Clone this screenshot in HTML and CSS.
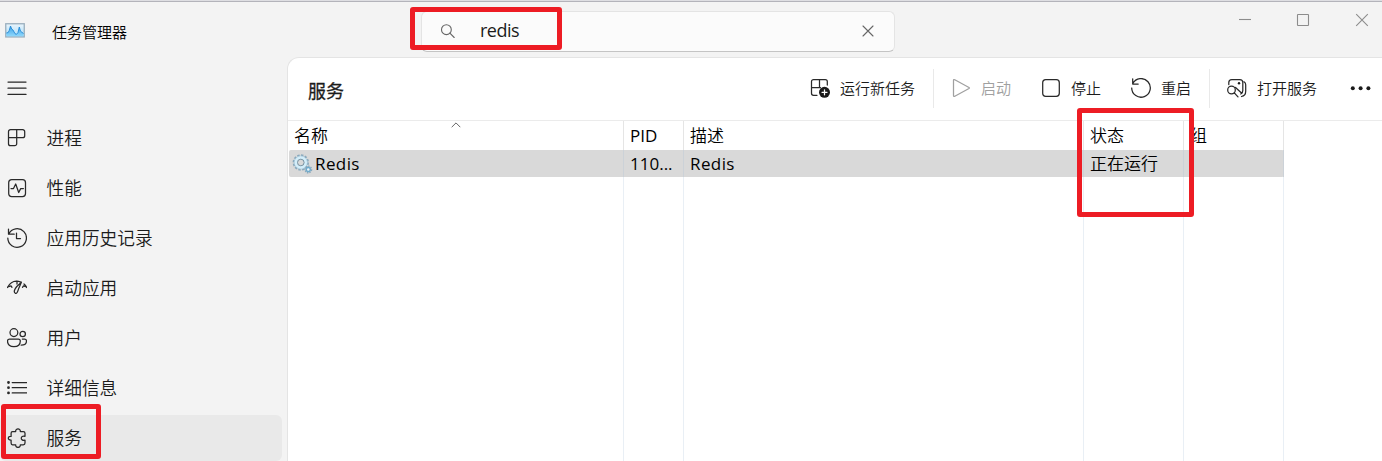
FILE: index.html
```html
<!DOCTYPE html>
<html lang="zh-CN">
<head>
<meta charset="utf-8">
<title>任务管理器</title>
<link rel="stylesheet" href="styles.css">
</head>
<body>
<div class="window">
  <header class="titlebar">
    <div class="brand">
      <svg class="app-icon" width="20" height="15" viewBox="0 0 20 15">
        <defs><linearGradient id="sky" x1="0" y1="0" x2="0" y2="1"><stop offset="0" stop-color="#eaf5fc"/><stop offset="1" stop-color="#a9dcf8"/></linearGradient>
        <linearGradient id="wave" x1="0" y1="0" x2="0" y2="1"><stop offset="0" stop-color="#3b9fe4"/><stop offset="1" stop-color="#8fd8fc"/></linearGradient></defs>
        <rect x=".75" y=".75" width="18.5" height="13.2" fill="url(#sky)" stroke="#9aaebd" stroke-width="1.3"/>
        <path d="M1.4 10l1.800-.5 1-2L5.500 3l1.200 3 1.300 1 2 3.700 1.500.6 1.500-1.800L14.300 4l1.200 4.200 3 2.300v2.800H1.400z" fill="url(#wave)"/>
        <path d="M1.400 10l1.800-.5 1-2L5.500 3l1.200 3 1.300 1 2 3.700 1.500.6 1.500-1.800L14.300 4l1.200 4.200 3 2.300" fill="none" stroke="#2489d6" stroke-width=".9"/>
      </svg>
      <span class="app-name">任务管理器</span>
    </div>
    <div class="search">
      <svg class="icon" width="16" height="16" viewBox="0 0 16 16"><circle cx="6.400" cy="6.700" r="4.900"/><path d="M9.900 10.200l4.300 4.300"/></svg>
      <span class="query">redis</span>
      <svg class="icon" width="12" height="12" viewBox="0 0 12 12"><path d="M1 1l10 10M11 1L1 11"/></svg>
    </div>
    <div class="controls">
      <svg width="14" height="14" viewBox="0 0 14 14"><path d="M2 6.500h12"/></svg>
      <svg width="14" height="14" viewBox="0 0 14 14"><rect x="1.500" y="1.500" width="11" height="11" rx=".5"/></svg>
      <svg width="14" height="14" viewBox="0 0 14 14"><path d="M1.200 1.200l11.600 11.600M12.800 1.200L1.200 12.800"/></svg>
    </div>
  </header>
  <nav class="sidebar">
    <div class="item"><svg class="icon" width="20" height="20" viewBox="0 0 20 20"><path d="M1 4h18M1 10.200h18M1 16.400h18"/></svg></div>
    <div class="item"><svg class="icon" width="20" height="20" viewBox="0 0 20 20"><path d="M3.500 1.700h12.200a2 2 0 0 1 2 2v4a2 2 0 0 1-2 2H9.700v6a2 2 0 0 1-2 2H3.500a2 2 0 0 1-2-2V3.700a2 2 0 0 1 2-2zM9.700 1.700v8M1.500 9.700h8.200"/></svg><span>进程</span></div>
    <div class="item"><svg class="icon" width="20" height="20" viewBox="0 0 20 20"><rect x="1.700" y="1.700" width="16.800" height="16.800" rx="3"/><path d="M4 10.600h2.500L8.700 6l3 8.500 2-3.900h2.700"/></svg><span>性能</span></div>
    <div class="item"><svg class="icon" width="20" height="20" viewBox="0 0 20 20"><path d="M1.500 1v5.200h5.700M1.700 6A9.300 9.300 0 1 1 .8 10M9.500 5v5.500h4"/></svg><span>应用历史记录</span></div>
    <div class="item"><svg class="icon" width="20" height="20" viewBox="0 0 20 20"><path d="M.5 9.500C3.500 4 8.500 2 14 4.200M17 6c1.200 1 2 2 2.600 3.500M10 3v3M.8 9l3.200-1.200 1 1.500M19.500 9l-3-1.200-1 1.500M8.300 15.300c-2-1.100-.8-4.100 1.500-6.800l4.600-4.300-2.700 6.200c-.8 3-1.900 5.500-3.400 4.900z"/></svg><span>启动应用</span></div>
    <div class="item"><svg class="icon" width="20" height="20" viewBox="0 0 20 20"><circle cx="6.900" cy="4.600" r="3.900"/><circle cx="15.700" cy="6" r="2.700"/><path d="M2.500 11h8.800q2 0 2 2c0 3.600-2.500 5.700-6.400 5.700S.5 16.600.5 13q0-2 2-2zM15.300 11h2.300q1.900 0 1.900 2c0 2.500-1.900 4.200-5.300 4.200"/></svg><span>用户</span></div>
    <div class="item"><svg class="icon" width="20" height="20" viewBox="0 0 20 20"><path d="M5.200 4.500H20M5.200 9.700H20M5.200 14.900H20"/><path class="bullets" d="M1.500 4.500h.01M1.500 9.700h.01M1.500 14.900h.01"/></svg><span>详细信息</span></div>
    <div class="item selected"><svg class="icon" width="20" height="20" viewBox="0 0 20 20"><path d="M5.500 3.500h3.200c-.5-3.400 5.100-3.400 4.600 0h3q1.700 0 1.700 1.700v3.100c-5-1.300-5 5.100 0 3.800v3q0 1.700-1.700 1.700h-3c.5 3.500-5.100 3.500-4.600 0H5.500q-1.400 0-1.400-1.700v-3c-3.700.3-3.700-4.300 0-3.800V5.200q0-1.700 1.400-1.700z"/></svg><span>服务</span></div>
  </nav>
  <main class="panel">
    <div class="toolbar">
      <h1>服务</h1>
      <div class="actions">
        <button><svg class="icon" width="20" height="20" viewBox="0 0 20 20"><path d="M7 17.300H3.500a2 2 0 0 1-2-2V3.500a2 2 0 0 1 2-2h11.800a2 2 0 0 1 2 2V7M9.500 1.500v8M1.500 9.500h9"/><circle class="solid" cx="14.500" cy="14.300" r="5.500"/><path class="plus" d="M14.500 11.800v5M12 14.300h5"/></svg>运行新任务</button>
        <i class="divider"></i>
        <button class="disabled"><svg class="icon" width="20" height="20" viewBox="0 0 20 20"><path d="M2.500 2.500v15q0 1.300 1.300.7L18 10.500q.8-.5 0-1L3.800 1.800q-1.300-.6-1.300.7z"/></svg>启动</button>
        <button><svg class="icon" width="20" height="20" viewBox="0 0 20 20"><rect x="1.700" y="1.700" width="16.600" height="16.600" rx="3"/></svg>停止</button>
        <button><svg class="icon" width="20" height="20" viewBox="0 0 20 20"><path d="M1.700.8v5.200h5.500M1.800 5.500A9.300 9.300 0 1 1 .7 10"/></svg>重启</button>
        <i class="divider"></i>
        <button><svg class="icon" width="20" height="20" viewBox="0 0 20 20"><path d="M1.800 6.500V4.500q0-3 3-3h8q3 0 3 3V12.500q0 2.500-2 3.500M17 3.800q1.700 1 1.700 3v6.500q0 4.500-4.200 5.200M8.500 9.500l6.300 5.800"/><circle cx="4.500" cy="12" r="3.800"/><path d="M7.300 14.800l3.700 4"/><circle class="solid" cx="12" cy="5.300" r="1.200"/></svg>打开服务</button>
        <svg class="more" width="21" height="20" viewBox="0 0 21 20"><circle cx="2.800" cy="10.300" r="2"/><circle cx="10.600" cy="10.300" r="2"/><circle cx="18.400" cy="10.300" r="2"/></svg>
      </div>
    </div>
    <div class="table">
      <div class="row head"><div class="sorted">名称<svg class="sort" width="10" height="6" viewBox="0 0 10 6"><path d="M.7 5.200L5 .9l4.300 4.300"/></svg></div><div class="latin">PID</div><div>描述</div><div>状态</div><div>组</div></div>
      <div class="row active"><div class="service latin name"><svg width="21" height="20" viewBox="0 0 21 20"><circle class="teeth" cx="8.800" cy="8.500" r="6.900"/><circle class="rim" cx="8.800" cy="8.500" r="6.400"/><circle class="gear" cx="8.800" cy="8.500" r="4.900"/><circle class="hub" cx="8.800" cy="8.500" r="3.300"/><circle class="teeth small" cx="16.300" cy="15.500" r="3.300"/><circle class="gear small" cx="16.300" cy="15.500" r="2"/></svg>Redis</div><div class="latin">110...</div><div class="latin name">Redis</div><div>正在运行</div><div></div></div>
      <div class="row blank"><div></div><div></div><div></div><div></div><div></div></div>
    </div>
  </main>
  <div class="mark mark-search"></div>
  <div class="mark mark-state"></div>
  <div class="mark mark-nav"></div>
</div>
</body>
</html>
```
FILE: styles.css
```css
* { box-sizing: border-box; }
body { margin: 0; overflow: hidden; font-family: "Open Sans", "Noto Sans CJK SC", sans-serif; color: #1b1b1b; }
svg { display: block; flex: none; fill: none; }
.window {
  position: relative; width: 1382px; height: 461px; overflow: hidden;
  display: grid; grid-template: 57px 404px / 287px 1095px; background: #f3f3f3;
}
.titlebar {
  grid-column: 1 / 3; display: grid; grid-template-columns: 421px 474px 1fr;
  border-top: 1px solid #dedee2; box-shadow: inset 0 1px #b3b3ba;
}
.brand { display: flex; align-items: flex-start; padding: 22px 0 0 5px; }
.app-name { margin: -2px 0 0 27px; font: 350 15px/22px "Noto Sans CJK SC", sans-serif; color: #000; }
.search {
  display: flex; align-items: center; height: 41px; margin-top: 10px; padding: 0 20px 2px 18px;
  background: #fbfbfb; border: 1px solid #e4e4e4; border-bottom-color: #c4c4c4; border-radius: 6px;
}
.search .icon { stroke: #666; stroke-width: 1.1; }
.query { flex: 1; margin: -2px 0 0 24px; font-size: 18px; line-height: 24px; letter-spacing: -.5px; }
.controls { display: flex; justify-content: flex-end; gap: 45px; padding: 12px 13px 0 0; }
.controls svg { stroke: #8c8c8c; stroke-width: 1.1; }
.icon { stroke: #292929; stroke-width: 1.25; stroke-linecap: round; stroke-linejoin: round; }
.sidebar { padding-top: 6px; }
.item { display: flex; align-items: center; gap: 19.500px; height: 50px; padding-left: 7px; font-size: 17.7px; font-weight: 350; line-height: 26px; }
.item.selected { height: 46px; margin: 2px 5px 0 0; background: #e9e9e9; border-radius: 6px; }
.bullets { stroke-width: 2.8; }
.panel { display: flex; flex-direction: column; background: #fff; border: 1px solid #e4e4e4; border-width: 1px 0 0 1px; border-top-left-radius: 12px; }
.toolbar { display: flex; align-items: center; justify-content: space-between; height: 63px; padding: 0 11px 0 20px; border-bottom: 1px solid #ebebeb; }
h1 { margin: 4px 0 0; font-size: 18px; font-weight: 400; line-height: 26px; -webkit-text-stroke: .3px; }
.actions { display: flex; align-items: center; height: 40px; margin-top: -2px; }
.actions button { display: flex; align-items: center; gap: 10px; padding: 0; border: 0; background: none; color: #1b1b1b; font: 350 15px/22px "Noto Sans CJK SC", sans-serif; }
.actions button + button { margin-left: 30px; }
.actions .disabled { color: #a0a0a0; }
.disabled .icon { stroke: #a0a0a0; }
.divider { width: 1px; height: 39px; margin: 0 17px 0 18px; background: #e9e9e9; }
.solid { fill: #1b1b1b; stroke: none; }
.plus { stroke: #fff; }
.more { margin-left: 33px; fill: #1b1b1b; }
.table { flex: 1; display: grid; grid-template-rows: 29px 27px 1fr; width: 996px; color: #000; font-size: 17px; font-weight: 350; line-height: 27px; }
.row { display: grid; grid-template-columns: 336px 60px 400px 100px 100px; }
.row > div { padding-left: 6px; border-right: 1px solid #e9eff5; white-space: nowrap; }
.head > div { border-color: #e5e5e5; padding-top: 1px; }
.active { margin-left: 1px; grid-template-columns: 335px 60px 400px 100px 100px; background: #d9d9d9; border-radius: 2px; }
.active > div { border-color: #ccd2d8; }
.active .service { display: flex; align-items: center; gap: 2px; padding-left: 3px; }
.latin { font-weight: 400; }
.name { letter-spacing: .4px; }
.head .sorted { display: grid; grid-template-columns: 157px 10px; padding-top: 0; line-height: 29px; }
.sort { margin-top: 1px; stroke: #666; }
.teeth { stroke: #8aa9bc; stroke-width: 2.6; stroke-dasharray: 2.300 1.313; }
.rim { stroke: #a9c9dc; stroke-width: 1; }
.gear { stroke: #d3eefa; stroke-width: 2.6; }
.hub { fill: #d9d9d9; stroke: #6d8b9d; stroke-width: .9; }
.teeth.small { stroke-width: 1.4; stroke-dasharray: 1.5 1; }
.gear.small { fill: #eef7fc; stroke: #6faacb; stroke-width: 1.4; }
.mark { position: absolute; border: 5px solid #ed1c24; border-radius: 3px; }
.mark-search { left: 410px; top: 7px; width: 152px; height: 43px; }
.mark-state { left: 1077px; top: 108px; width: 117px; height: 109px; }
.mark-nav { left: 1px; top: 404px; width: 100px; height: 55px; }
```
